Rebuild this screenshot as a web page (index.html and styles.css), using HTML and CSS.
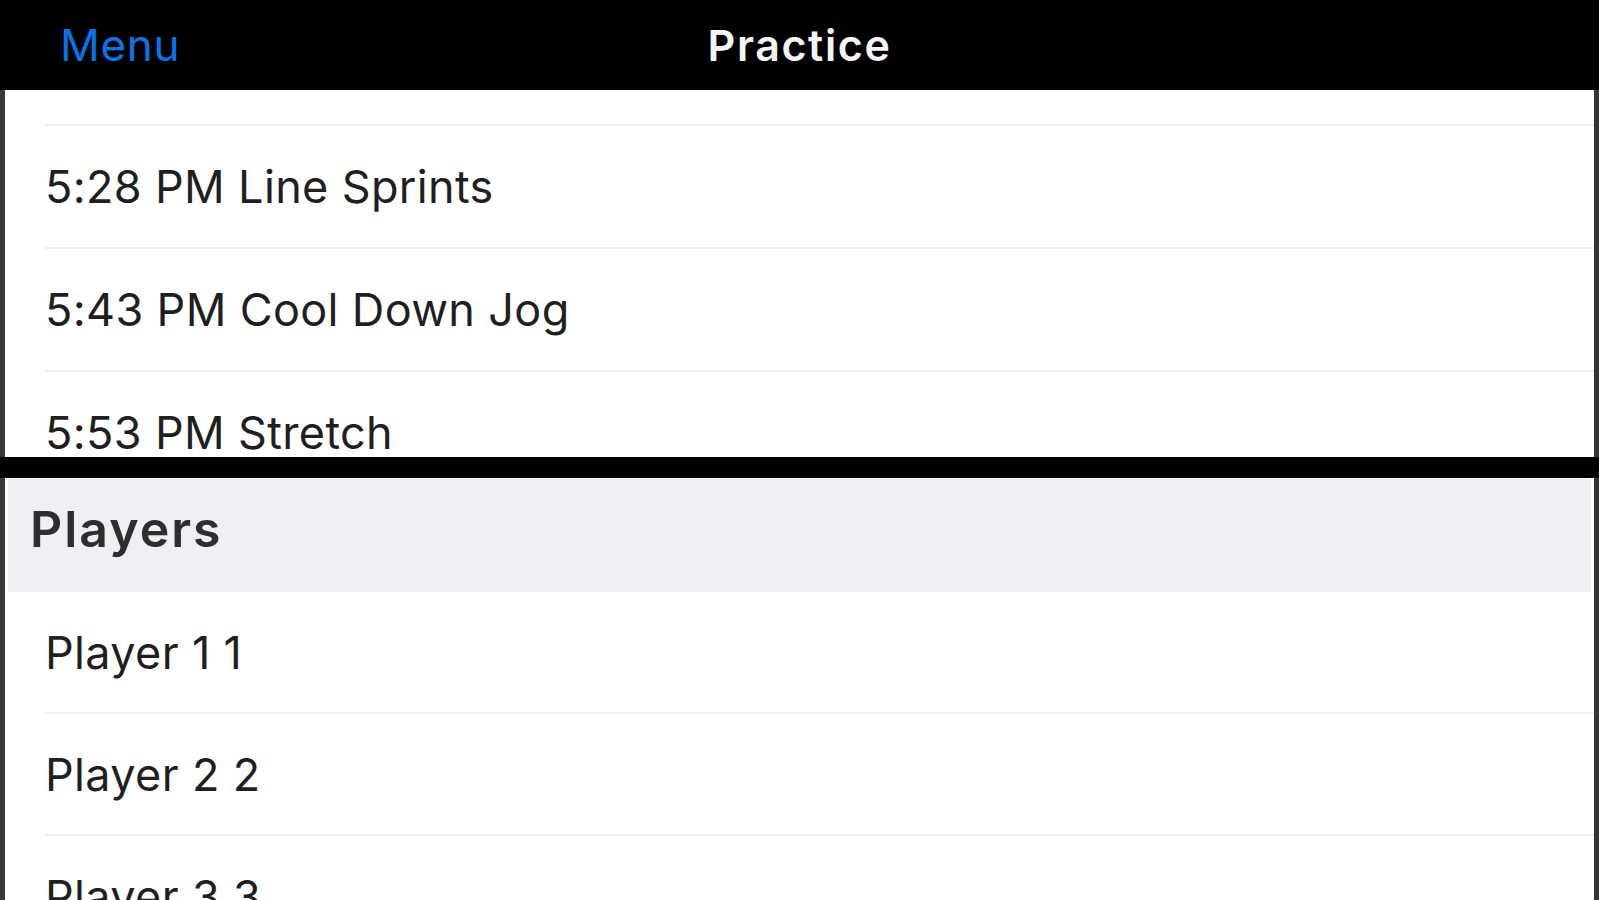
FILE: index.html
```html
<!DOCTYPE html>
<html lang="en">
<head>
<meta charset="utf-8">
<title>Practice</title>
<link rel="stylesheet" href="styles.css">
</head>
<body>
<div class="app">
  <header class="navbar">
    <div class="nav-side nav-left"><span class="nav-button">Menu</span></div>
    <h1 class="nav-title">Practice</h1>
    <div class="nav-side"></div>
  </header>

  <section class="panel panel-top">
    <ul class="list list-top">
      <li class="row row-partial"></li>
      <li class="row"><span class="row-label">5:28 PM Line Sprints</span></li>
      <li class="row"><span class="row-label">5:43 PM Cool Down Jog</span></li>
      <li class="row"><span class="row-label">5:53 PM Stretch</span></li>
    </ul>
  </section>

  <section class="panel panel-bottom">
    <div class="section-header"><span class="section-title">Players</span></div>
    <ul class="list list-bottom">
      <li class="row"><span class="row-label">Player 1 1</span></li>
      <li class="row"><span class="row-label">Player 2 2</span></li>
      <li class="row"><span class="row-label">Player 3 3</span></li>
    </ul>
  </section>
</div>
</body>
</html>
```

FILE: styles.css
```css
* {
  box-sizing: border-box;
}

html, body {
  margin: 0;
  padding: 0;
  background: #000;
  height: 100%;
  overflow: hidden;
}

body {
  font-family: "Inter", "Noto Sans", "Liberation Sans", sans-serif;
  color: #1f1f1f;
}

.app {
  display: flex;
  flex-direction: column;
  height: 900px;
}

.navbar {
  flex: 0 0 90px;
  display: grid;
  grid-template-columns: 1fr auto 1fr;
  align-items: center;
  background: #000;
}

.nav-left {
  padding-left: 60px;
}

.nav-button {
  color: #0a74e6;
  font-size: 44px;
  font-weight: 400;
  letter-spacing: 0.7px;
}

.nav-title {
  margin: 0;
  color: #f4f4f4;
  font-size: 43px;
  font-weight: 600;
  letter-spacing: 1.6px;
}

.panel {
  background: #fff;
  border-left: 5px solid #3a3a3a;
  border-right: 5px solid #343434;
  overflow: hidden;
}

.panel-top {
  flex: 0 0 367px;
}

.panel-bottom {
  flex: 1 1 auto;
  margin-top: 21px;
}

.list {
  list-style: none;
  margin: 0;
  padding: 0;
}

.row {
  display: flex;
  align-items: center;
  margin-left: 40px;
  border-bottom: 2px solid #efefef;
  font-size: 45px;
  letter-spacing: 0.35px;
}

.list-top .row {
  height: 123px;
}

.list-top .row-partial {
  height: 36px;
}

.list-bottom .row {
  height: 122px;
}

.section-header {
  display: flex;
  align-items: center;
  height: 114px;
  margin: 0 3px;
  padding: 0 0 13px 22px;
  background: #efeff4;
}

.section-title {
  font-size: 50px;
  font-weight: 600;
  letter-spacing: 2px;
  color: #2e2e2e;
}
```
